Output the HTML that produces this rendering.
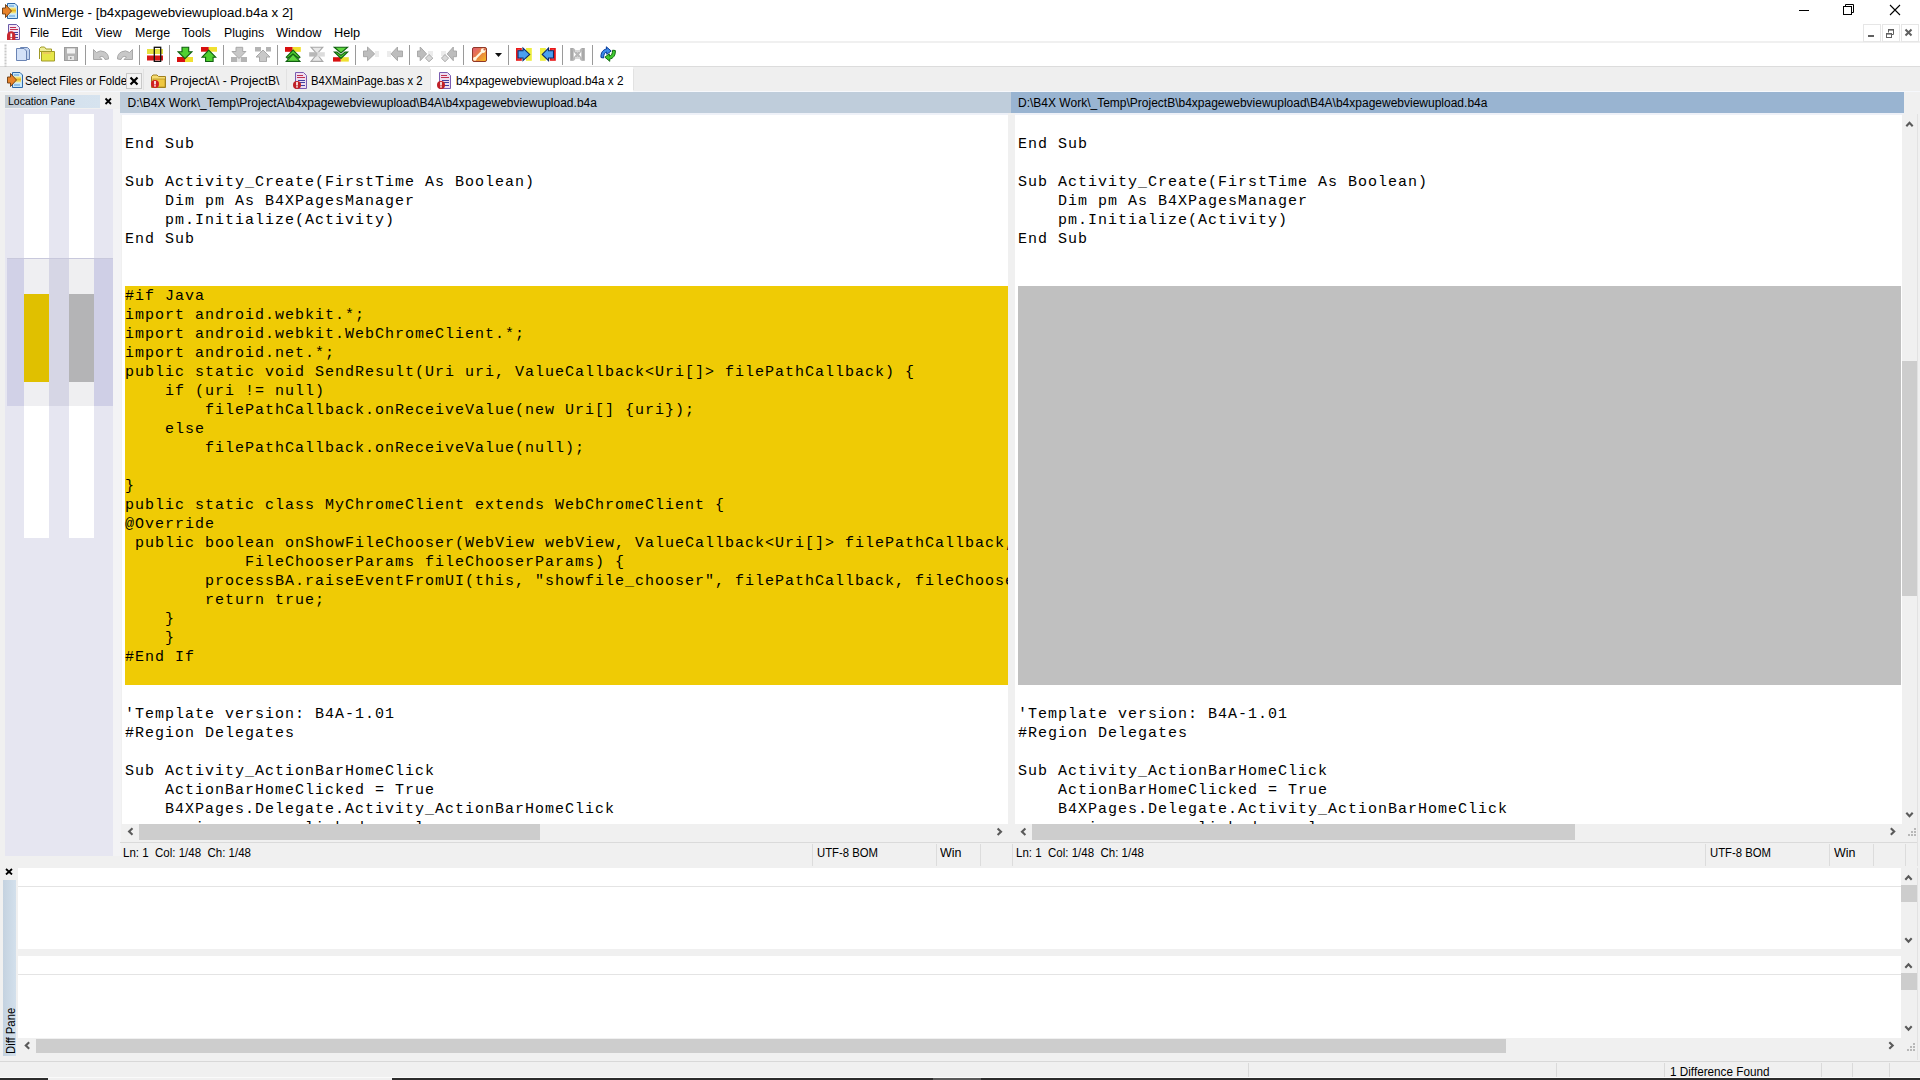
<!DOCTYPE html><html><head><meta charset="utf-8"><style>html,body{margin:0;padding:0;width:1920px;height:1080px;overflow:hidden;position:relative;background:#f0f0f0}</style></head><body><div style="position:absolute;left:0px;top:0px;width:1920px;height:1080px;background:#f0f0f0"></div>
<div style="position:absolute;left:0px;top:0px;width:1920px;height:66px;background:#fff"></div>
<div style="position:absolute;left:0px;top:41px;width:1920px;height:2px;background:#f0f0f0"></div>
<div style="position:absolute;left:0px;top:66px;width:1920px;height:1px;background:#dcdcdc"></div>
<div style="position:absolute;left:0px;top:67px;width:1920px;height:25px;background:#efefef"></div>
<div style="position:absolute;left:0px;top:91px;width:1920px;height:1px;background:#f6f8fc"></div>
<div style="position:absolute;left:23px;top:6.80px;font:12px/12px 'Liberation Sans',sans-serif;color:#000;white-space:pre;transform:scaleX(1.1121);transform-origin:0 0;">WinMerge - [b4xpagewebviewupload.b4a x 2]</div>
<svg style="position:absolute;left:2px;top:3px;" width="17" height="17" viewBox="0 0 17 17"><defs><linearGradient id="apg" x1="0" y1="0" x2="0" y2="1"><stop offset="0" stop-color="#f8f0a0"/><stop offset="0.5" stop-color="#e8b820"/><stop offset="1" stop-color="#f8f0a0"/></linearGradient></defs><path d="M5.5 0.5H13L15.5 3V15.5H5.5Z" fill="#c8e8fa" stroke="#2f68a8"/><rect x="7" y="2.5" width="5" height="1" fill="#5a9ad8"/><rect x="7" y="12.5" width="6" height="1" fill="#5a9ad8"/><rect x="7" y="4.5" width="7" height="6" fill="url(#apg)"/><path d="M0.5 5H3.5V1.5L9.5 8L3.5 14.5V11H0.5Z" fill="#e8822a" stroke="#6a3a10" stroke-width="0.9"/></svg>
<svg style="position:absolute;left:1790px;top:0px;" width="130" height="22" viewBox="0 0 130 22"><rect x="9" y="10" width="10" height="1" fill="#000"/><rect x="53.5" y="6.5" width="8" height="8" fill="none" stroke="#000"/><path d="M55.5 6.5V4.5H63.5V12.5H61.5" fill="none" stroke="#000"/><path d="M100 5L110 15M110 5L100 15" stroke="#000" stroke-width="1.1"/></svg>
<div style="position:absolute;left:1863px;top:24px;width:18px;height:18px;box-sizing:border-box;border:1px solid #e6e6e6;background:#fff"></div>
<div style="position:absolute;left:1882px;top:24px;width:18px;height:18px;box-sizing:border-box;border:1px solid #e6e6e6;background:#fff"></div>
<div style="position:absolute;left:1901px;top:24px;width:18px;height:18px;box-sizing:border-box;border:1px solid #e6e6e6;background:#fff"></div>
<svg style="position:absolute;left:1863px;top:24px;" width="57" height="18" viewBox="0 0 57 18"><rect x="5" y="11" width="6" height="2" fill="#606060"/><rect x="23.5" y="9.5" width="5" height="4" fill="none" stroke="#606060"/><rect x="23" y="9" width="6" height="1.6" fill="#606060"/><path d="M25.5 8.5V5.5H30.5V10.5H29" fill="none" stroke="#606060"/><rect x="25" y="5" width="6" height="1.6" fill="#606060"/><path d="M42.5 5.5L48.5 11.5M48.5 5.5L42.5 11.5" stroke="#606060" stroke-width="2"/></svg>
<svg style="position:absolute;left:6px;top:24px;" width="15" height="17" viewBox="0 0 15 17"><path d="M2.5 0.5H10.5L13.5 3.5V15.5H2.5Z" fill="#f4e4f4" stroke="#6a5aa8"/><rect x="4" y="3" width="6" height="1" fill="#c03050"/><rect x="4" y="5" width="8" height="1" fill="#c03050"/><rect x="5" y="8" width="7" height="1" fill="#4040a0"/><rect x="5" y="10" width="7" height="1" fill="#4040a0"/><rect x="5" y="13" width="7" height="1" fill="#4040a0"/><path d="M1 11.5A4.2 4.2 0 0 1 9.4 11.5V16H1Z" fill="#c82830"/><rect x="4.4" y="9.5" width="1.7" height="3.6" fill="#fff"/><rect x="4.4" y="13.8" width="1.7" height="1.5" fill="#fff"/></svg>
<div style="position:absolute;left:29.5px;top:26.80px;font:12px/12px 'Liberation Sans',sans-serif;color:#000;white-space:pre;transform:scaleX(0.9928);transform-origin:0 0;">File</div>
<div style="position:absolute;left:61.400000000000006px;top:26.80px;font:12px/12px 'Liberation Sans',sans-serif;color:#000;white-space:pre;">Edit</div>
<div style="position:absolute;left:95.10000000000001px;top:26.80px;font:12px/12px 'Liberation Sans',sans-serif;color:#000;white-space:pre;transform:scaleX(1.0388);transform-origin:0 0;">View</div>
<div style="position:absolute;left:134.5px;top:26.80px;font:12px/12px 'Liberation Sans',sans-serif;color:#000;white-space:pre;transform:scaleX(1.0317);transform-origin:0 0;">Merge</div>
<div style="position:absolute;left:182.29999999999998px;top:26.80px;font:12px/12px 'Liberation Sans',sans-serif;color:#000;white-space:pre;transform:scaleX(1.0207);transform-origin:0 0;">Tools</div>
<div style="position:absolute;left:223.6px;top:26.80px;font:12px/12px 'Liberation Sans',sans-serif;color:#000;white-space:pre;transform:scaleX(1.0213);transform-origin:0 0;">Plugins</div>
<div style="position:absolute;left:276.09999999999997px;top:26.80px;font:12px/12px 'Liberation Sans',sans-serif;color:#000;white-space:pre;transform:scaleX(1.0658);transform-origin:0 0;">Window</div>
<div style="position:absolute;left:334.2px;top:26.80px;font:12px/12px 'Liberation Sans',sans-serif;color:#000;white-space:pre;transform:scaleX(1.0612);transform-origin:0 0;">Help</div>
<svg style="position:absolute;left:4px;top:44px;" width="3" height="23" viewBox="0 0 3 23"><rect x="0.5" y="0.5" width="2" height="2" fill="#c8c8c8"/><rect x="0.5" y="3.5" width="2" height="2" fill="#c8c8c8"/><rect x="0.5" y="6.5" width="2" height="2" fill="#c8c8c8"/><rect x="0.5" y="9.5" width="2" height="2" fill="#c8c8c8"/><rect x="0.5" y="12.5" width="2" height="2" fill="#c8c8c8"/><rect x="0.5" y="15.5" width="2" height="2" fill="#c8c8c8"/><rect x="0.5" y="18.5" width="2" height="2" fill="#c8c8c8"/><rect x="0.5" y="21.5" width="2" height="2" fill="#c8c8c8"/></svg>
<div style="position:absolute;left:85px;top:45px;width:1px;height:20px;background:#9a9a9a"></div>
<div style="position:absolute;left:139px;top:45px;width:1px;height:20px;background:#9a9a9a"></div>
<div style="position:absolute;left:169px;top:45px;width:1px;height:20px;background:#9a9a9a"></div>
<div style="position:absolute;left:223px;top:45px;width:1px;height:20px;background:#9a9a9a"></div>
<div style="position:absolute;left:277px;top:45px;width:1px;height:20px;background:#9a9a9a"></div>
<div style="position:absolute;left:355px;top:45px;width:1px;height:20px;background:#9a9a9a"></div>
<div style="position:absolute;left:409px;top:45px;width:1px;height:20px;background:#9a9a9a"></div>
<div style="position:absolute;left:463px;top:45px;width:1px;height:20px;background:#9a9a9a"></div>
<div style="position:absolute;left:508px;top:45px;width:1px;height:20px;background:#9a9a9a"></div>
<div style="position:absolute;left:562px;top:45px;width:1px;height:20px;background:#9a9a9a"></div>
<div style="position:absolute;left:592px;top:45px;width:1px;height:20px;background:#9a9a9a"></div>
<svg style="position:absolute;left:16px;top:46px;" width="16" height="16" viewBox="0 0 16 16"><path d="M4.5 1.5H11.5L13.5 3.5V13.5H4.5Z" fill="#c2d4f0" stroke="#6a84b4"/><path d="M0.5 2.5H8L10.5 5V14.5H0.5Z" fill="#d4e2f8" stroke="#6a84b4"/></svg>
<svg style="position:absolute;left:39px;top:46px;" width="16" height="16" viewBox="0 0 16 16"><path d="M0.5 2.5L2 1H5.5L7 3H12.5V5.5H0.5V13Z" fill="#eeee98" stroke="#a09a28"/><path d="M2.5 5.5H15.5V15H2.5Z" fill="#e6e648" stroke="#a09a28"/><rect x="4" y="6.5" width="8" height="1" fill="#f0b070"/></svg>
<svg style="position:absolute;left:64px;top:46px;" width="16" height="16" viewBox="0 0 16 16"><rect x="0.5" y="1.5" width="13" height="13" fill="#b4b4b4" stroke="#9c9c9c"/><rect x="3" y="2.5" width="8" height="5" fill="#f2f2f2"/><rect x="4" y="10" width="6" height="4" fill="#e6e6e6"/><rect x="6" y="11" width="1.5" height="2" fill="#9c9c9c"/></svg>
<svg style="position:absolute;left:93px;top:46px;" width="16" height="16" viewBox="0 0 16 16"><path d="M0.5 3.5V13.5H9L6.5 11A3.6 3.6 0 0 1 12 13.5L15.5 13A7.5 7.5 0 0 0 3.5 6.5Z" fill="#c8c8c8" stroke="#a8a8a8"/></svg>
<svg style="position:absolute;left:117px;top:46px;" width="16" height="16" viewBox="0 0 16 16"><path d="M15.5 3.5V13.5H7L9.5 11A3.6 3.6 0 0 0 4 13.5L0.5 13A7.5 7.5 0 0 1 12.5 6.5Z" fill="#c8c8c8" stroke="#a8a8a8"/></svg>
<svg style="position:absolute;left:147px;top:46px;" width="16" height="16" viewBox="0 0 16 16"><rect x="0" y="3" width="16" height="5" fill="#e6e040"/><rect x="0" y="9.5" width="16" height="5" fill="#d81818"/><rect x="7.3" y="1.3" width="6.4" height="14.2" fill="none" stroke="#101010" stroke-width="1.3"/></svg>
<svg style="position:absolute;left:177px;top:46px;" width="16" height="16" viewBox="0 0 16 16"><rect x="0" y="11" width="8" height="5" fill="#d81010"/><rect x="8" y="11" width="8" height="5" fill="#f0e030"/><path d="M5 1.3H11.7V5.7H14.9L8 12.6L1.1 5.7H5Z" fill="#50d030" stroke="#106010" stroke-width="1.1"/></svg>
<svg style="position:absolute;left:201px;top:46px;" width="16" height="16" viewBox="0 0 16 16"><rect x="0" y="1" width="7.8" height="4.7" fill="#d81010"/><rect x="7.8" y="1" width="8.2" height="4.7" fill="#f0e030"/><path d="M7.75 4.1L14.9 11.3H12.1V15.6H4.6V11.3H0.9Z" fill="#50d030" stroke="#106010" stroke-width="1.1"/></svg>
<svg style="position:absolute;left:231px;top:46px;" width="16" height="16" viewBox="0 0 16 16"><rect x="0" y="11" width="6" height="5" fill="#b4b4b4"/><rect x="10" y="11" width="6" height="5" fill="#b4b4b4"/><rect x="6" y="11" width="4" height="5" fill="#e4e4e4"/><path d="M5 1.3H11.7V5.5H14.9L8 12.5L1 5.5H5Z" fill="#c8c8c8" stroke="#a8a8a8"/></svg>
<svg style="position:absolute;left:255px;top:46px;" width="16" height="16" viewBox="0 0 16 16"><rect x="0" y="1" width="6" height="4.5" fill="#b4b4b4"/><rect x="11" y="1" width="5" height="4.5" fill="#b4b4b4"/><path d="M8 4L15 11H11.5V15.6H4.5V11H1Z" fill="#c8c8c8" stroke="#a8a8a8"/></svg>
<svg style="position:absolute;left:285px;top:46px;" width="16" height="16" viewBox="0 0 16 16"><rect x="0" y="1" width="7.7" height="4.8" fill="#d81010"/><rect x="7.7" y="1" width="8.1" height="4.8" fill="#f0e030"/><path d="M1.3 11.2L8.1 4.1L15 11.2L13.6 12.3L8 8L2.6 12.3Z" fill="#50d030" stroke="#106010" stroke-width="1.1"/><path d="M1.3 15.4L8 8.2L15 15.4Z" fill="#60d840" stroke="#106010" stroke-width="1.1"/></svg>
<svg style="position:absolute;left:309px;top:46px;" width="16" height="16" viewBox="0 0 16 16"><path d="M2 1.2H13.8L8 8L13.8 15.4H2L8 8Z" fill="#e8e8e8" stroke="#a8a8a8" stroke-width="1.1"/><rect x="0.2" y="6.2" width="7.5" height="4.4" fill="#b8b8b8"/><rect x="8.3" y="6.2" width="7.5" height="4.4" fill="#dcdcdc"/></svg>
<svg style="position:absolute;left:333px;top:46px;" width="16" height="16" viewBox="0 0 16 16"><rect x="0" y="11.2" width="7.8" height="4.4" fill="#d81010"/><rect x="7.8" y="11.2" width="8" height="4.4" fill="#f0e030"/><path d="M1.2 6L4 6L8 9.3L12 6L14.7 6L8 12.5Z" fill="#50d030" stroke="#106010" stroke-width="1.1"/><path d="M1.2 1.2H14.7L8 7Z" fill="#60d840" stroke="#106010" stroke-width="1.1"/></svg>
<svg style="position:absolute;left:363px;top:46px;" width="16" height="16" viewBox="0 0 16 16"><rect x="12" y="5" width="4" height="6" fill="#ececec"/><path d="M0.5 5H4.5V1L11.7 7.9L4.5 14.7V10.7H0.5Z" fill="#bdbdbd" stroke="#a4a4a4" stroke-width="0.9"/></svg>
<svg style="position:absolute;left:387px;top:46px;" width="16" height="16" viewBox="0 0 16 16"><rect x="0" y="5" width="4" height="6" fill="#ececec"/><path d="M15.5 5H10.5V1L4 7.9L10.5 14.7V10.7H15.5Z" fill="#bdbdbd" stroke="#a4a4a4" stroke-width="0.9"/></svg>
<svg style="position:absolute;left:417px;top:46px;" width="16" height="16" viewBox="0 0 16 16"><rect x="11" y="5" width="5" height="5" fill="#ececec"/><path d="M0.5 5H3.2V1L9.6 7.9L3.2 14.7V10.7H0.5Z" fill="#bdbdbd" stroke="#a4a4a4" stroke-width="0.9"/><path d="M12 8.5L15.9 12.2L12 15.7L8.4 12.2Z" fill="#d8d8d8" stroke="#a4a4a4" stroke-width="0.9"/></svg>
<svg style="position:absolute;left:441px;top:46px;" width="16" height="16" viewBox="0 0 16 16"><rect x="0" y="5" width="5" height="5" fill="#ececec"/><path d="M15.5 5H12.3V1L6.2 7.9L12.3 14.7V10.7H15.5Z" fill="#bdbdbd" stroke="#a4a4a4" stroke-width="0.9"/><path d="M4 8.5L7.6 12.2L4 15.7L0.4 12.2Z" fill="#d8d8d8" stroke="#a4a4a4" stroke-width="0.9"/></svg>
<svg style="position:absolute;left:471px;top:46px;" width="16" height="16" viewBox="0 0 16 16"><defs><linearGradient id="wr" x1="0" y1="0" x2="1" y2="1"><stop offset="0" stop-color="#e05a78"/><stop offset="0.5" stop-color="#e88040"/><stop offset="1" stop-color="#f8c020"/></linearGradient></defs><rect x="1.5" y="1.5" width="14" height="14" rx="1.5" fill="url(#wr)" stroke="#903828"/><path d="M3.5 13.2L11.5 5.2" stroke="#fff8e0" stroke-width="2.2"/><circle cx="12.2" cy="4.6" r="2.4" fill="#fff8e0"/><circle cx="13.4" cy="3.4" r="1" fill="#d06050"/><circle cx="3.8" cy="12.9" r="1.8" fill="#fff8e0"/></svg>
<svg style="position:absolute;left:495px;top:53px;" width="7" height="4" viewBox="0 0 7 4"><path d="M0 0H7L3.5 4Z" fill="#101010"/></svg>
<svg style="position:absolute;left:516px;top:46px;" width="16" height="16" viewBox="0 0 16 16"><rect x="0" y="2" width="5.8" height="12.8" fill="#e81818"/><rect x="1.5" y="3.5" width="2.5" height="9.8" fill="#f06070"/><rect x="10" y="2" width="5.8" height="12.8" fill="#eeee40"/><path d="M2 4.8H7V2L13.7 8.4L7 14.6V12H2Z" fill="#4aa0f0" stroke="#0a2a6a" stroke-width="1.1"/></svg>
<svg style="position:absolute;left:540px;top:46px;" width="16" height="16" viewBox="0 0 16 16"><rect x="0" y="2" width="5.8" height="12.8" fill="#eeee40"/><rect x="9.8" y="2" width="6" height="12.8" fill="#e81818"/><rect x="11.5" y="3.5" width="2.5" height="9.8" fill="#f06070"/><path d="M13.5 4.8H8.5V2L2.2 8.4L8.5 14.6V12H13.5Z" fill="#4aa0f0" stroke="#0a2a6a" stroke-width="1.1"/></svg>
<svg style="position:absolute;left:570px;top:46px;" width="16" height="16" viewBox="0 0 16 16"><rect x="0.2" y="2" width="3.4" height="12.8" fill="#a8a8a8"/><rect x="11.4" y="2" width="3.4" height="12.8" fill="#a8a8a8"/><path d="M3 3L12 14M12 3L3 14" stroke="#b8b8b8" stroke-width="2.4"/><rect x="5" y="4" width="5" height="2" fill="#d8d8d8"/><rect x="5" y="11" width="5" height="2" fill="#d8d8d8"/></svg>
<svg style="position:absolute;left:600px;top:46px;" width="16" height="16" viewBox="0 0 16 16"><path d="M1 11.5C0.5 7 3 3.5 6.5 3L6.3 0.8L11.2 5L6.8 8.3L6.6 6C4.6 6.4 3.6 8.6 3.6 12Z" fill="#3a8ae8" stroke="#0a3a9a" stroke-width="1"/><path d="M15.3 4.5C15.8 9 13.2 12.6 9.6 13.1L9.8 15.3L4.9 11.2L9.3 7.8L9.5 10.1C11.5 9.7 12.6 7.5 12.6 4.2Z" fill="#40c830" stroke="#106a10" stroke-width="1"/></svg>
<div style="position:absolute;left:430px;top:67px;width:203px;height:25px;background:#fff"></div>
<div style="position:absolute;left:143px;top:69px;width:1px;height:21px;background:#e2e2e2"></div>
<div style="position:absolute;left:286px;top:69px;width:1px;height:21px;background:#e2e2e2"></div>
<div style="position:absolute;left:430px;top:69px;width:1px;height:21px;background:#e2e2e2"></div>
<div style="position:absolute;left:633px;top:69px;width:1px;height:21px;background:#e2e2e2"></div>
<svg style="position:absolute;left:7px;top:72px;" width="17" height="17" viewBox="0 0 17 17"><defs><linearGradient id="apg2" x1="0" y1="0" x2="0" y2="1"><stop offset="0" stop-color="#f8f0a0"/><stop offset="0.5" stop-color="#e8b820"/><stop offset="1" stop-color="#f8f0a0"/></linearGradient></defs><path d="M5.5 0.5H13L15.5 3V15.5H5.5Z" fill="#c8e8fa" stroke="#2f68a8"/><rect x="7" y="2.5" width="5" height="1" fill="#5a9ad8"/><rect x="7" y="12.5" width="6" height="1" fill="#5a9ad8"/><rect x="7" y="4.5" width="7" height="6" fill="url(#apg2)"/><path d="M0.5 5H3.5V1.5L9.5 8L3.5 14.5V11H0.5Z" fill="#e8822a" stroke="#6a3a10" stroke-width="0.9"/></svg>
<div style="position:absolute;left:25px;top:74.80px;font:12px/12px 'Liberation Sans',sans-serif;color:#000;white-space:pre;transform:scaleX(0.9324);transform-origin:0 0;">Select Files or Folde</div>
<div style="position:absolute;left:126px;top:73px;width:16px;height:16px;box-sizing:border-box;border:1px solid #c8c8c8;background:#f4f4f4"></div>
<svg style="position:absolute;left:126px;top:73px;" width="16" height="16" viewBox="0 0 16 16"><path d="M4.5 4.5L11.5 11.5M11.5 4.5L4.5 11.5" stroke="#000" stroke-width="2.2"/></svg>
<svg style="position:absolute;left:150px;top:73px;" width="17" height="15" viewBox="0 0 17 15"><path d="M1.5 3.5L3 2H7L8.5 3.5H15.5V14.5H1.5Z" fill="#f6dc70" stroke="#a08020"/><rect x="3" y="6" width="12" height="8" fill="#f0c840" stroke="#a08020" stroke-width="0.6"/><circle cx="5" cy="11" r="4" fill="#d02020"/><rect x="4.2" y="8" width="1.6" height="3.5" fill="#fff"/><rect x="4.2" y="12.2" width="1.6" height="1.4" fill="#fff"/></svg>
<div style="position:absolute;left:169.5px;top:74.80px;font:12px/12px 'Liberation Sans',sans-serif;color:#000;white-space:pre;transform:scaleX(1.0134);transform-origin:0 0;">ProjectA\ - ProjectB\</div>
<svg style="position:absolute;left:293px;top:72px;" width="15" height="17" viewBox="0 0 15 17"><path d="M2.5 0.5H10.5L13.5 3.5V16.5H2.5Z" fill="#eeddf0" stroke="#7a5cb0"/><rect x="4" y="3" width="6" height="1" fill="#c03050"/><rect x="4" y="5" width="8" height="1" fill="#c03050"/><rect x="5" y="8" width="7" height="1" fill="#4040a0"/><rect x="5" y="10" width="7" height="1" fill="#4040a0"/><rect x="5" y="13" width="7" height="1" fill="#4040a0"/><circle cx="4" cy="13" r="4" fill="#c02028"/><rect x="3.2" y="10" width="1.6" height="3.5" fill="#fff"/><rect x="3.2" y="14.2" width="1.6" height="1.4" fill="#fff"/></svg>
<div style="position:absolute;left:311px;top:74.80px;font:12px/12px 'Liberation Sans',sans-serif;color:#000;white-space:pre;transform:scaleX(0.9389);transform-origin:0 0;">B4XMainPage.bas x 2</div>
<svg style="position:absolute;left:437px;top:72px;" width="15" height="17" viewBox="0 0 15 17"><path d="M2.5 0.5H10.5L13.5 3.5V16.5H2.5Z" fill="#eeddf0" stroke="#7a5cb0"/><rect x="4" y="3" width="6" height="1" fill="#c03050"/><rect x="4" y="5" width="8" height="1" fill="#c03050"/><rect x="5" y="8" width="7" height="1" fill="#4040a0"/><rect x="5" y="10" width="7" height="1" fill="#4040a0"/><rect x="5" y="13" width="7" height="1" fill="#4040a0"/><circle cx="4" cy="13" r="4" fill="#c02028"/><rect x="3.2" y="10" width="1.6" height="3.5" fill="#fff"/><rect x="3.2" y="14.2" width="1.6" height="1.4" fill="#fff"/></svg>
<div style="position:absolute;left:455.5px;top:74.80px;font:12px/12px 'Liberation Sans',sans-serif;color:#000;white-space:pre;transform:scaleX(0.9807);transform-origin:0 0;">b4xpagewebviewupload.b4a x 2</div>
<div style="position:absolute;left:5px;top:95px;width:95px;height:13px;background:linear-gradient(90deg,#c2cad2,#d3e0ec 40%,#d6e3ef)"></div>
<div style="position:absolute;left:7.5px;top:95.65px;font:11px/11px 'Liberation Sans',sans-serif;color:#000;white-space:pre;transform:scaleX(0.9531);transform-origin:0 0;">Location Pane</div>
<svg style="position:absolute;left:104px;top:97px;" width="9" height="9" viewBox="0 0 9 9"><path d="M1.5 1.5L7 7M7 1.5L1.5 7" stroke="#000" stroke-width="1.8"/></svg>
<div style="position:absolute;left:5px;top:109px;width:108px;height:747px;background:#e6e6f1"></div>
<div style="position:absolute;left:113px;top:109px;width:8px;height:747px;background:#f3f3f5"></div>
<div style="position:absolute;left:24px;top:114px;width:25px;height:424px;background:#fff"></div>
<div style="position:absolute;left:69px;top:114px;width:25px;height:424px;background:#fff"></div>
<div style="position:absolute;left:7px;top:258px;width:17px;height:148px;background:#d1d1e7"></div>
<div style="position:absolute;left:24px;top:258px;width:25px;height:148px;background:#efeff2"></div>
<div style="position:absolute;left:49px;top:258px;width:20px;height:148px;background:#d6d6e5"></div>
<div style="position:absolute;left:69px;top:258px;width:25px;height:148px;background:#efeff1"></div>
<div style="position:absolute;left:94px;top:258px;width:19px;height:148px;background:#cfcfe6"></div>
<div style="position:absolute;left:7px;top:258px;width:106px;height:1px;background:#c8c8dc"></div>
<div style="position:absolute;left:24px;top:294px;width:25px;height:88px;background:#e0c000"></div>
<div style="position:absolute;left:69px;top:294px;width:25px;height:88px;background:#b4b4b6"></div>
<div style="position:absolute;left:120px;top:92px;width:891px;height:21px;background:#bfcddb"></div>
<div style="position:absolute;left:1011px;top:92px;width:893px;height:21px;background:#99b4d1"></div>
<div style="position:absolute;left:127.5px;top:96.80px;font:12px/12px 'Liberation Sans',sans-serif;color:#000;white-space:pre;">D:\B4X Work\_Temp\ProjectA\b4xpagewebviewupload\B4A\b4xpagewebviewupload.b4a</div>
<div style="position:absolute;left:1018px;top:96.80px;font:12px/12px 'Liberation Sans',sans-serif;color:#000;white-space:pre;">D:\B4X Work\_Temp\ProjectB\b4xpagewebviewupload\B4A\b4xpagewebviewupload.b4a</div>
<div style="position:absolute;left:120px;top:113px;width:1784px;height:2px;background:#eef1f8"></div>
<div style="position:absolute;left:122px;top:115px;width:886px;height:709px;overflow:hidden;background:#fff">
<div style="position:absolute;left:3px;top:171px;width:883px;height:399px;background:#efcb05"></div>
<div style="position:absolute;left:3px;top:20px;height:19px;font:15px/19px 'Liberation Mono',monospace;letter-spacing:0.9986px;white-space:pre;color:#000">End Sub</div>
<div style="position:absolute;left:3px;top:58px;height:19px;font:15px/19px 'Liberation Mono',monospace;letter-spacing:0.9986px;white-space:pre;color:#000">Sub Activity_Create(FirstTime As Boolean)</div>
<div style="position:absolute;left:3px;top:77px;height:19px;font:15px/19px 'Liberation Mono',monospace;letter-spacing:0.9986px;white-space:pre;color:#000">    Dim pm As B4XPagesManager</div>
<div style="position:absolute;left:3px;top:96px;height:19px;font:15px/19px 'Liberation Mono',monospace;letter-spacing:0.9986px;white-space:pre;color:#000">    pm.Initialize(Activity)</div>
<div style="position:absolute;left:3px;top:115px;height:19px;font:15px/19px 'Liberation Mono',monospace;letter-spacing:0.9986px;white-space:pre;color:#000">End Sub</div>
<div style="position:absolute;left:3px;top:172px;height:19px;font:15px/19px 'Liberation Mono',monospace;letter-spacing:0.9986px;white-space:pre;color:#000">#if Java</div>
<div style="position:absolute;left:3px;top:191px;height:19px;font:15px/19px 'Liberation Mono',monospace;letter-spacing:0.9986px;white-space:pre;color:#000">import android.webkit.*;</div>
<div style="position:absolute;left:3px;top:210px;height:19px;font:15px/19px 'Liberation Mono',monospace;letter-spacing:0.9986px;white-space:pre;color:#000">import android.webkit.WebChromeClient.*;</div>
<div style="position:absolute;left:3px;top:229px;height:19px;font:15px/19px 'Liberation Mono',monospace;letter-spacing:0.9986px;white-space:pre;color:#000">import android.net.*;</div>
<div style="position:absolute;left:3px;top:248px;height:19px;font:15px/19px 'Liberation Mono',monospace;letter-spacing:0.9986px;white-space:pre;color:#000">public static void SendResult(Uri uri, ValueCallback&lt;Uri[]&gt; filePathCallback) {</div>
<div style="position:absolute;left:3px;top:267px;height:19px;font:15px/19px 'Liberation Mono',monospace;letter-spacing:0.9986px;white-space:pre;color:#000">    if (uri != null)</div>
<div style="position:absolute;left:3px;top:286px;height:19px;font:15px/19px 'Liberation Mono',monospace;letter-spacing:0.9986px;white-space:pre;color:#000">        filePathCallback.onReceiveValue(new Uri[] {uri});</div>
<div style="position:absolute;left:3px;top:305px;height:19px;font:15px/19px 'Liberation Mono',monospace;letter-spacing:0.9986px;white-space:pre;color:#000">    else</div>
<div style="position:absolute;left:3px;top:324px;height:19px;font:15px/19px 'Liberation Mono',monospace;letter-spacing:0.9986px;white-space:pre;color:#000">        filePathCallback.onReceiveValue(null);</div>
<div style="position:absolute;left:3px;top:362px;height:19px;font:15px/19px 'Liberation Mono',monospace;letter-spacing:0.9986px;white-space:pre;color:#000">}</div>
<div style="position:absolute;left:3px;top:381px;height:19px;font:15px/19px 'Liberation Mono',monospace;letter-spacing:0.9986px;white-space:pre;color:#000">public static class MyChromeClient extends WebChromeClient {</div>
<div style="position:absolute;left:3px;top:400px;height:19px;font:15px/19px 'Liberation Mono',monospace;letter-spacing:0.9986px;white-space:pre;color:#000">@Override</div>
<div style="position:absolute;left:3px;top:419px;height:19px;font:15px/19px 'Liberation Mono',monospace;letter-spacing:0.9986px;white-space:pre;color:#000"> public boolean onShowFileChooser(WebView webView, ValueCallback&lt;Uri[]&gt; filePathCallback,</div>
<div style="position:absolute;left:3px;top:438px;height:19px;font:15px/19px 'Liberation Mono',monospace;letter-spacing:0.9986px;white-space:pre;color:#000">            FileChooserParams fileChooserParams) {</div>
<div style="position:absolute;left:3px;top:457px;height:19px;font:15px/19px 'Liberation Mono',monospace;letter-spacing:0.9986px;white-space:pre;color:#000">        processBA.raiseEventFromUI(this, "showfile_chooser", filePathCallback, fileChooserParams);</div>
<div style="position:absolute;left:3px;top:476px;height:19px;font:15px/19px 'Liberation Mono',monospace;letter-spacing:0.9986px;white-space:pre;color:#000">        return true;</div>
<div style="position:absolute;left:3px;top:495px;height:19px;font:15px/19px 'Liberation Mono',monospace;letter-spacing:0.9986px;white-space:pre;color:#000">    }</div>
<div style="position:absolute;left:3px;top:514px;height:19px;font:15px/19px 'Liberation Mono',monospace;letter-spacing:0.9986px;white-space:pre;color:#000">    }</div>
<div style="position:absolute;left:3px;top:533px;height:19px;font:15px/19px 'Liberation Mono',monospace;letter-spacing:0.9986px;white-space:pre;color:#000">#End If</div>
<div style="position:absolute;left:3px;top:590px;height:19px;font:15px/19px 'Liberation Mono',monospace;letter-spacing:0.9986px;white-space:pre;color:#000">'Template version: B4A-1.01</div>
<div style="position:absolute;left:3px;top:609px;height:19px;font:15px/19px 'Liberation Mono',monospace;letter-spacing:0.9986px;white-space:pre;color:#000">#Region Delegates</div>
<div style="position:absolute;left:3px;top:647px;height:19px;font:15px/19px 'Liberation Mono',monospace;letter-spacing:0.9986px;white-space:pre;color:#000">Sub Activity_ActionBarHomeClick</div>
<div style="position:absolute;left:3px;top:666px;height:19px;font:15px/19px 'Liberation Mono',monospace;letter-spacing:0.9986px;white-space:pre;color:#000">    ActionBarHomeClicked = True</div>
<div style="position:absolute;left:3px;top:685px;height:19px;font:15px/19px 'Liberation Mono',monospace;letter-spacing:0.9986px;white-space:pre;color:#000">    B4XPages.Delegate.Activity_ActionBarHomeClick</div>
<div style="position:absolute;left:3px;top:704px;height:19px;font:15px/19px 'Liberation Mono',monospace;letter-spacing:0.9986px;white-space:pre;color:#000">       i          li k d     l  </div>
</div>
<div style="position:absolute;left:1015px;top:115px;width:887px;height:709px;overflow:hidden;background:#fff">
<div style="position:absolute;left:3px;top:171px;width:883px;height:399px;background:#c0c0c0"></div>
<div style="position:absolute;left:3px;top:20px;height:19px;font:15px/19px 'Liberation Mono',monospace;letter-spacing:0.9986px;white-space:pre;color:#000">End Sub</div>
<div style="position:absolute;left:3px;top:58px;height:19px;font:15px/19px 'Liberation Mono',monospace;letter-spacing:0.9986px;white-space:pre;color:#000">Sub Activity_Create(FirstTime As Boolean)</div>
<div style="position:absolute;left:3px;top:77px;height:19px;font:15px/19px 'Liberation Mono',monospace;letter-spacing:0.9986px;white-space:pre;color:#000">    Dim pm As B4XPagesManager</div>
<div style="position:absolute;left:3px;top:96px;height:19px;font:15px/19px 'Liberation Mono',monospace;letter-spacing:0.9986px;white-space:pre;color:#000">    pm.Initialize(Activity)</div>
<div style="position:absolute;left:3px;top:115px;height:19px;font:15px/19px 'Liberation Mono',monospace;letter-spacing:0.9986px;white-space:pre;color:#000">End Sub</div>
<div style="position:absolute;left:3px;top:590px;height:19px;font:15px/19px 'Liberation Mono',monospace;letter-spacing:0.9986px;white-space:pre;color:#000">'Template version: B4A-1.01</div>
<div style="position:absolute;left:3px;top:609px;height:19px;font:15px/19px 'Liberation Mono',monospace;letter-spacing:0.9986px;white-space:pre;color:#000">#Region Delegates</div>
<div style="position:absolute;left:3px;top:647px;height:19px;font:15px/19px 'Liberation Mono',monospace;letter-spacing:0.9986px;white-space:pre;color:#000">Sub Activity_ActionBarHomeClick</div>
<div style="position:absolute;left:3px;top:666px;height:19px;font:15px/19px 'Liberation Mono',monospace;letter-spacing:0.9986px;white-space:pre;color:#000">    ActionBarHomeClicked = True</div>
<div style="position:absolute;left:3px;top:685px;height:19px;font:15px/19px 'Liberation Mono',monospace;letter-spacing:0.9986px;white-space:pre;color:#000">    B4XPages.Delegate.Activity_ActionBarHomeClick</div>
<div style="position:absolute;left:3px;top:704px;height:19px;font:15px/19px 'Liberation Mono',monospace;letter-spacing:0.9986px;white-space:pre;color:#000">       i          li k d     l  </div>
</div>
<div style="position:absolute;left:1008px;top:113px;width:7px;height:754px;background:#f0f0f0"></div>
<div style="position:absolute;left:1011px;top:92px;width:0px;height:0px;"></div>
<div style="position:absolute;left:1902px;top:114px;width:16px;height:710px;background:#f0f0f0"></div>
<div style="position:absolute;left:1902px;top:361px;width:15px;height:235px;background:#cdcdcd"></div>
<div style="position:absolute;left:121px;top:824px;width:887px;height:17px;background:#f0f0f0"></div>
<div style="position:absolute;left:139px;top:824px;width:401px;height:16px;background:#cdcdcd"></div>
<div style="position:absolute;left:1014px;top:824px;width:888px;height:17px;background:#f0f0f0"></div>
<div style="position:absolute;left:1032px;top:824px;width:543px;height:16px;background:#cdcdcd"></div>
<div style="position:absolute;left:1917px;top:114px;width:1px;height:946px;background:#e2e2e2"></div>
<svg style="position:absolute;left:0px;top:0px;z-index:5;pointer-events:none" width="1920" height="1080" viewBox="0 0 1920 1080"><path d="M1906.3 126.2L1909.5 122.8L1912.7 126.2" stroke="#5a5a5a" stroke-width="2.1" fill="none"/><path d="M1906.3 812.8L1909.5 816.2L1912.7 812.8" stroke="#5a5a5a" stroke-width="2.1" fill="none"/><path d="M132.5 828.3L129.10000000000002 831.5L132.5 834.7" stroke="#5a5a5a" stroke-width="2.1" fill="none"/><path d="M997.5999999999999 828.5L1001.0 831.7L997.5999999999999 834.9000000000001" stroke="#5a5a5a" stroke-width="2.1" fill="none"/><path d="M1025.4 828.5L1022.0 831.7L1025.4 834.9000000000001" stroke="#5a5a5a" stroke-width="2.1" fill="none"/><path d="M1890.8 828.3L1894.2 831.5L1890.8 834.7" stroke="#5a5a5a" stroke-width="2.1" fill="none"/><path d="M1905.3 879.7L1908.5 876.3L1911.7 879.7" stroke="#5a5a5a" stroke-width="2.1" fill="none"/><path d="M1905.3 938.3L1908.5 941.7L1911.7 938.3" stroke="#5a5a5a" stroke-width="2.1" fill="none"/><path d="M1905.3 967.7L1908.5 964.3L1911.7 967.7" stroke="#5a5a5a" stroke-width="2.1" fill="none"/><path d="M1905.3 1026.3L1908.5 1029.7L1911.7 1026.3" stroke="#5a5a5a" stroke-width="2.1" fill="none"/><path d="M29.2 1042.3L25.8 1045.5L29.2 1048.7" stroke="#5a5a5a" stroke-width="2.1" fill="none"/><path d="M1889.3 1042.3L1892.7 1045.5L1889.3 1048.7" stroke="#5a5a5a" stroke-width="2.1" fill="none"/><rect x="1914" y="828" width="2" height="2" fill="#b8b8b8"/><rect x="1911" y="831" width="2" height="2" fill="#b8b8b8"/><rect x="1914" y="831" width="2" height="2" fill="#b8b8b8"/><rect x="1908" y="834" width="2" height="2" fill="#b8b8b8"/><rect x="1911" y="834" width="2" height="2" fill="#b8b8b8"/><rect x="1914" y="834" width="2" height="2" fill="#b8b8b8"/><rect x="1913" y="1043" width="2" height="2" fill="#b8b8b8"/><rect x="1910" y="1046" width="2" height="2" fill="#b8b8b8"/><rect x="1913" y="1046" width="2" height="2" fill="#b8b8b8"/><rect x="1907" y="1049" width="2" height="2" fill="#b8b8b8"/><rect x="1910" y="1049" width="2" height="2" fill="#b8b8b8"/><rect x="1913" y="1049" width="2" height="2" fill="#b8b8b8"/></svg>
<div style="position:absolute;left:120px;top:842px;width:1797px;height:1px;background:#dadada"></div>
<div style="position:absolute;left:122.5px;top:846.80px;font:12px/12px 'Liberation Sans',sans-serif;color:#000;white-space:pre;transform:scaleX(0.9594);transform-origin:0 0;">Ln: 1  Col: 1/48  Ch: 1/48</div>
<div style="position:absolute;left:816.5px;top:846.80px;font:12px/12px 'Liberation Sans',sans-serif;color:#000;white-space:pre;transform:scaleX(0.9433);transform-origin:0 0;">UTF-8 BOM</div>
<div style="position:absolute;left:940px;top:846.80px;font:12px/12px 'Liberation Sans',sans-serif;color:#000;white-space:pre;transform:scaleX(1.0402);transform-origin:0 0;">Win</div>
<div style="position:absolute;left:1016px;top:846.80px;font:12px/12px 'Liberation Sans',sans-serif;color:#000;white-space:pre;transform:scaleX(0.9594);transform-origin:0 0;">Ln: 1  Col: 1/48  Ch: 1/48</div>
<div style="position:absolute;left:1710px;top:846.80px;font:12px/12px 'Liberation Sans',sans-serif;color:#000;white-space:pre;transform:scaleX(0.9433);transform-origin:0 0;">UTF-8 BOM</div>
<div style="position:absolute;left:1833.5px;top:846.80px;font:12px/12px 'Liberation Sans',sans-serif;color:#000;white-space:pre;transform:scaleX(1.0402);transform-origin:0 0;">Win</div>
<div style="position:absolute;left:812px;top:844px;width:1px;height:22px;background:#dcdcdc"></div>
<div style="position:absolute;left:936px;top:844px;width:1px;height:22px;background:#dcdcdc"></div>
<div style="position:absolute;left:980px;top:844px;width:1px;height:22px;background:#dcdcdc"></div>
<div style="position:absolute;left:1012px;top:844px;width:1px;height:22px;background:#dcdcdc"></div>
<div style="position:absolute;left:1705px;top:844px;width:1px;height:22px;background:#dcdcdc"></div>
<div style="position:absolute;left:1829px;top:844px;width:1px;height:22px;background:#dcdcdc"></div>
<div style="position:absolute;left:1873px;top:844px;width:1px;height:22px;background:#dcdcdc"></div>
<div style="position:absolute;left:1905px;top:844px;width:1px;height:22px;background:#dcdcdc"></div>
<div style="position:absolute;left:0px;top:866px;width:1920px;height:2px;background:#f0f0f0"></div>
<svg style="position:absolute;left:5px;top:868px;" width="8" height="7" viewBox="0 0 8 7"><path d="M1 1L7 6.5M7 1L1 6.5" stroke="#000" stroke-width="1.8"/></svg>
<div style="position:absolute;left:3px;top:880px;width:13px;height:176px;background:linear-gradient(90deg,#c4d2e0,#d3e0ec)"></div>
<div style="position:absolute;left:4.5px;top:1054px;transform:rotate(-90deg) scaleX(0.94);transform-origin:0 0;font:12px/12px 'Liberation Sans',sans-serif;color:#000;white-space:pre">Diff Pane</div>
<div style="position:absolute;left:18px;top:868px;width:1884px;height:81px;background:#fff"></div>
<div style="position:absolute;left:18px;top:886px;width:1884px;height:1px;background:#e4e4e4"></div>
<div style="position:absolute;left:18px;top:956px;width:1884px;height:82px;background:#fff"></div>
<div style="position:absolute;left:18px;top:974px;width:1884px;height:1px;background:#e4e4e4"></div>
<div style="position:absolute;left:1901px;top:868px;width:16px;height:81px;background:#f0f0f0"></div>
<div style="position:absolute;left:1901px;top:885px;width:16px;height:17px;background:#cdcdcd"></div>
<div style="position:absolute;left:1901px;top:956px;width:16px;height:82px;background:#f0f0f0"></div>
<div style="position:absolute;left:1901px;top:973px;width:16px;height:17px;background:#cdcdcd"></div>
<div style="position:absolute;left:18px;top:1038px;width:1883px;height:16px;background:#f0f0f0"></div>
<div style="position:absolute;left:36px;top:1039px;width:1470px;height:14px;background:#cdcdcd"></div>
<div style="position:absolute;left:0px;top:1061px;width:1920px;height:1px;background:#d8d8d8"></div>
<div style="position:absolute;left:1248px;top:1063px;width:1px;height:15px;background:#dadada"></div>
<div style="position:absolute;left:1556px;top:1063px;width:1px;height:15px;background:#dadada"></div>
<div style="position:absolute;left:1664px;top:1063px;width:1px;height:15px;background:#dadada"></div>
<div style="position:absolute;left:1821px;top:1063px;width:1px;height:15px;background:#dadada"></div>
<div style="position:absolute;left:1852px;top:1063px;width:1px;height:15px;background:#dadada"></div>
<div style="position:absolute;left:1889px;top:1063px;width:1px;height:15px;background:#dadada"></div>
<div style="position:absolute;left:1670px;top:1065.80px;font:12px/12px 'Liberation Sans',sans-serif;color:#000;white-space:pre;transform:scaleX(0.9770);transform-origin:0 0;">1 Difference Found</div>
<div style="position:absolute;left:0px;top:1077px;width:1920px;height:1px;background:#fafafa"></div>
<div style="position:absolute;left:0px;top:1078px;width:1920px;height:2px;background:#2c2c2c"></div>
<div style="position:absolute;left:48px;top:1078px;width:344px;height:2px;background:#f0f0f0"></div>
<div style="position:absolute;left:933px;top:1078px;width:48px;height:2px;background:#5a5a5a"></div></body></html>
